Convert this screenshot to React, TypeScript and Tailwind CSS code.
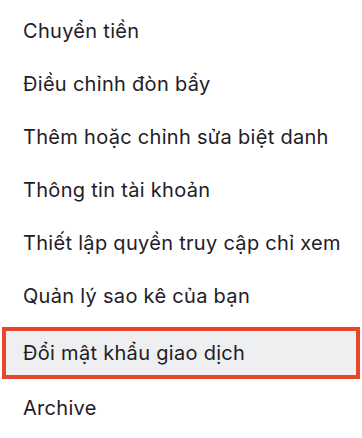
import React from 'react';

const items = [
  'Chuyển tiền',
  'Điều chỉnh đòn bẩy',
  'Thêm hoặc chỉnh sửa biệt danh',
  'Thông tin tài khoản',
  'Thiết lập quyền truy cập chỉ xem',
  'Quản lý sao kê của bạn',
];

export default function App() {
  return (
    <div
      className="w-[362px] h-[438px] bg-white overflow-hidden text-[#1e2026] text-[20px] tracking-[0.3px]"
      style={{ fontFamily: 'Inter, "Noto Sans", sans-serif' }}
    >
      <ul className="pt-[4px] flex flex-col">
        {items.map((label) => (
          <li key={label} className="h-[53px] flex items-center pl-[23px]">
            {label}
          </li>
        ))}
        <li className="mt-[5px] mx-[2px] h-[52px] flex items-center pl-[17px] border-4 border-[#e9452b] bg-[#eeeff1]">
          Đổi mật khẩu giao dịch
        </li>
        <li className="mt-[2px] h-[53px] flex items-center pl-[23px]">Archive</li>
      </ul>
    </div>
  );
}
